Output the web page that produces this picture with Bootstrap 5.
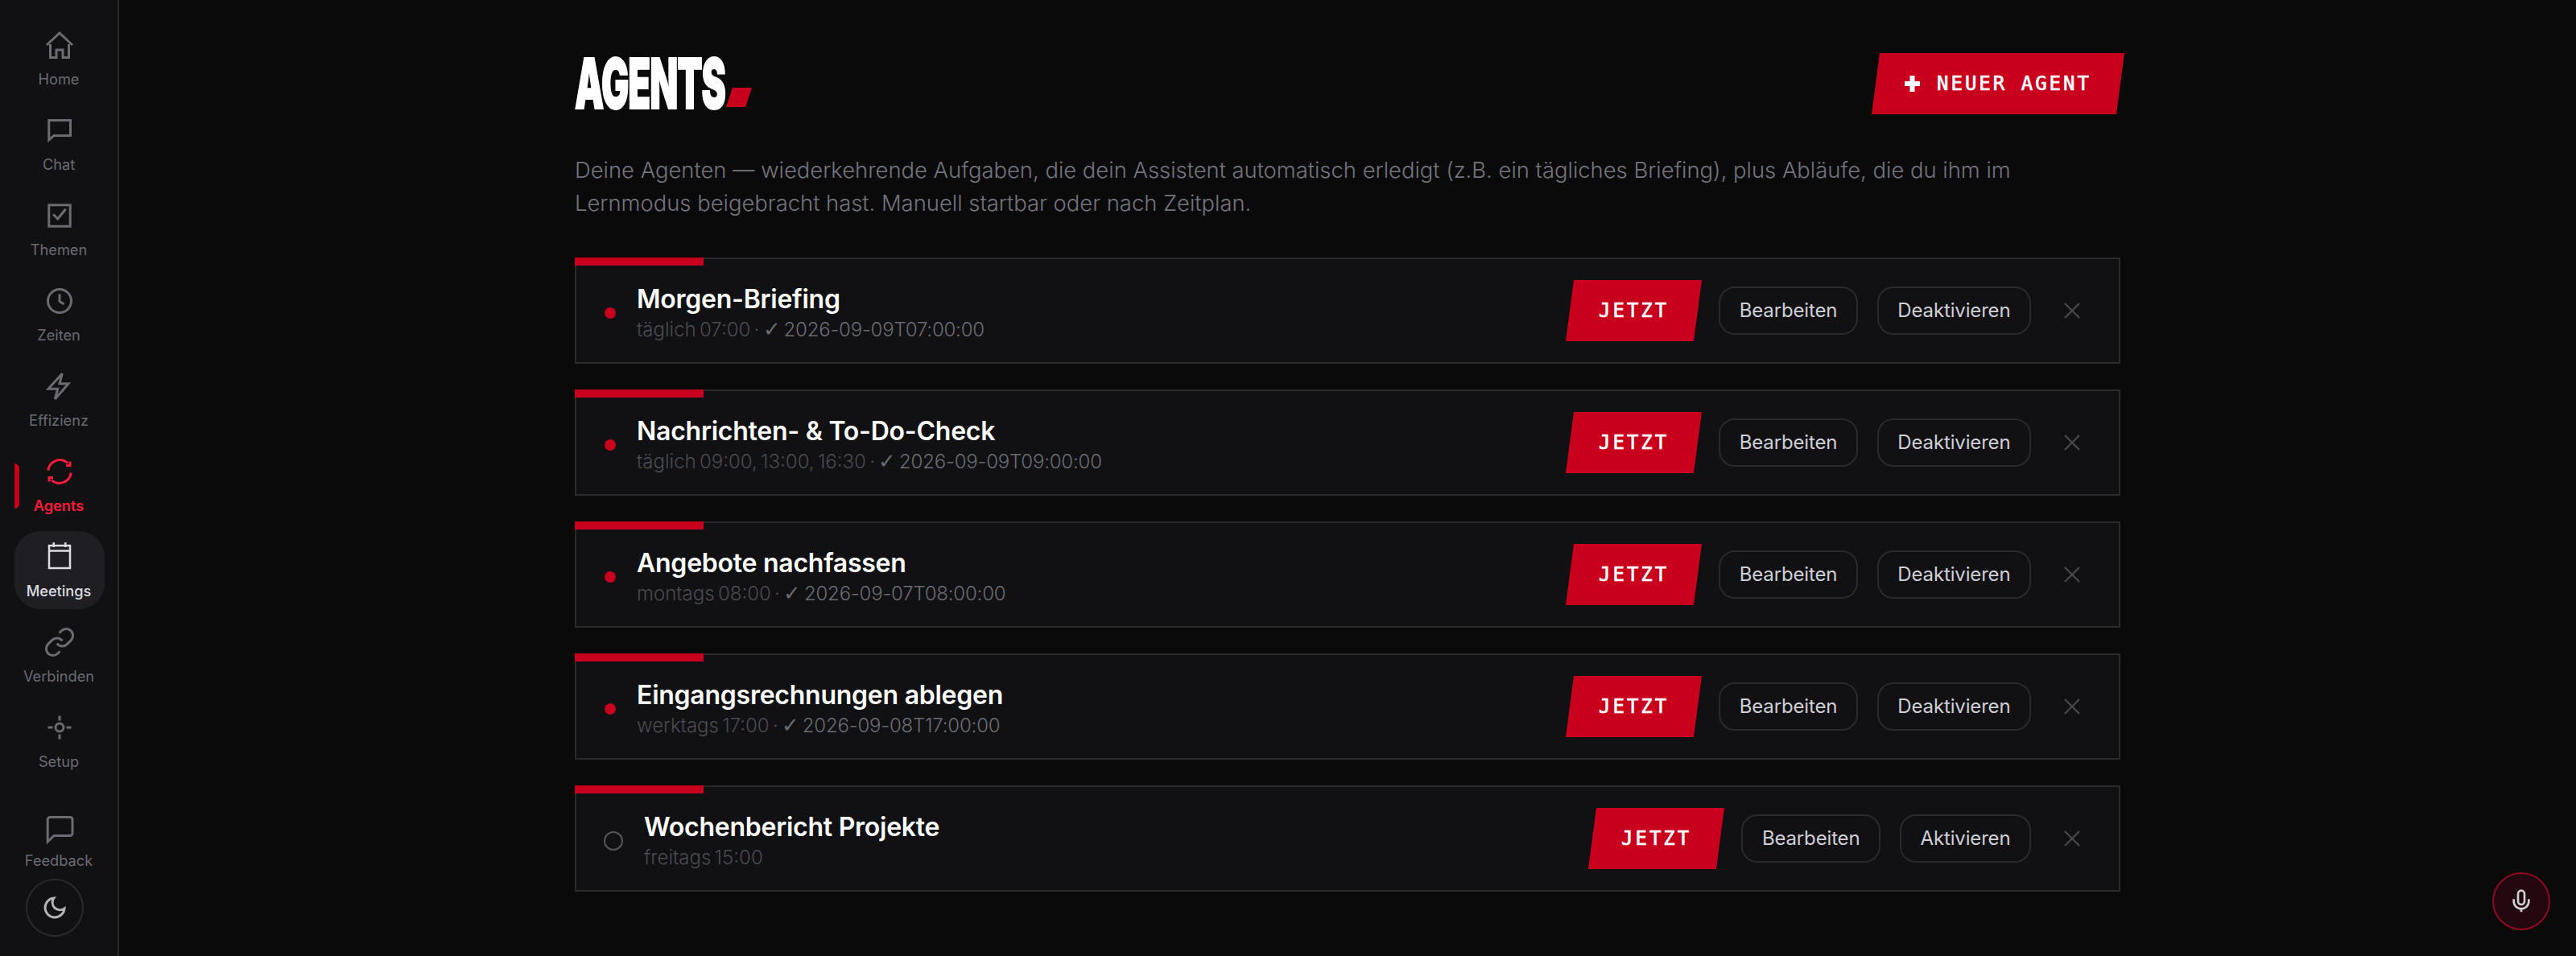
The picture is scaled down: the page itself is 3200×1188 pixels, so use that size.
<!DOCTYPE html>
<html lang="de">
<head>
    <meta charset="UTF-8">
    <title>Agents</title>
    <link href="https://cdn.jsdelivr.net/npm/bootstrap@5.3.3/dist/css/bootstrap.min.css" rel="stylesheet">
    <style>
        body { background: #0a0a0b; font-family: Inter, "Noto Sans", sans-serif; color: #fff; overflow: hidden; }
        .side { width: 148px; height: 1188px; background: #111113; border-right: 2px solid #2a2a2d; padding: 24px 0 24px 18px; flex-shrink: 0; }
        .side-item { width: 112px; height: 97px; margin-bottom: 9px; border-radius: 32px; color: #6b6b72; font-size: 18.2px; text-decoration: none; padding-top: 14px; }
        .side-item svg { width: 36px; height: 36px; fill: none; stroke: currentColor; stroke-width: 3; display: block; flex-shrink: 0; }
        .side-item span { line-height: 26px; margin-top: 11px; margin-right: 2px; }
        .side-item.is-active { color: #ff1a3c; font-weight: 600; }
        .side-item.is-hover { background: #1f1f23; color: #dcdce0; font-weight: 500; }
        .side-item.is-hover svg { stroke-width: 2.5; }
        .side-item svg.link-glyph { width: 40px; height: 40px; margin: -2px 0; stroke-width: 1.8; }
        .active-bar { left: 0; top: 22px; width: 6px; height: 56px; background: #c8001e; border-radius: 0 6px 6px 0; }
        .side-bottom { margin-top: 35px; }
        .side-bottom .side-item { height: 72px; margin-bottom: 0; padding-top: 0; }
        .side-bottom .side-item span { margin-top: 7px; }
        .moon-btn { width: 72px; height: 72px; margin-left: 14px; margin-top: 7px; border: 2px solid #2a2a2d; border-radius: 50%; background: transparent; color: #b4b4b9; padding: 0; }
        .page { width: 1920px; margin: 0 auto; padding-top: 66px; }
        .head-row { height: 76px; }
        .big-title { margin: 0; height: 68px; font: 900 86px/68px Inter, sans-serif; }
        .big-title b { display: inline-block; width: 188px; font-weight: 900; letter-spacing: -2px; transform: scaleX(.53); transform-origin: left center; white-space: nowrap; -webkit-text-stroke: 2px #fff; }
        .title-slash { display: inline-block; width: 32px; height: 24px; margin-top: 39px; background: #c8001e; clip-path: polygon(8px 0, 100% 0, calc(100% - 8px) 100%, 0 100%); }
        .red-btn { height: 76px; padding: 0 36px; background: #c8001e; color: #fff; border: 0; border-radius: 0; transform: skewX(-7.5deg); font: 400 24px "DejaVu Sans Mono", monospace; letter-spacing: 3px; -webkit-text-stroke: .7px #fff; }
        .red-btn > span { transform: skewX(7.5deg); }
        .red-btn:hover { background: #c8001e; color: #fff; }
        .agent-row .red-btn { margin-right: 2px; }
        .plus-mark { width: 19px; height: 20px; margin-right: 21px; fill: #fff; }
        .intro { margin: 49px 0 47px; font-size: 27.4px; line-height: 41px; font-weight: 300; color: #74747c; width: 1800px; }
        .agent-row { height: 132px; margin-bottom: 32px; background: #111113; border: 2px solid #2a2a2d; padding: 0 30px 0 34px; }
        .row-bar { top: -2px; left: -2px; width: 160px; height: 10px; background: #c8001e; }
        .state-dot { width: 14px; height: 14px; margin: 6px 26px 0 1px; border-radius: 50%; background: #c8001e; flex-shrink: 0; }
        .state-ring { width: 24px; height: 24px; margin: 6px 26px 0 0; border-radius: 50%; border: 2px solid #55555b; flex-shrink: 0; }
        .row-title { font-size: 32px; line-height: 42px; font-weight: 570; letter-spacing: -.25px; color: #fff; margin-top: 6px; }
        .row-sub { font-size: 24px; line-height: 36px; font-weight: 300; color: #4a4a50; word-spacing: -2.5px; margin-top: -1px; }
        .row-sub em { font-style: normal; color: #6b6b72; letter-spacing: -.2px; }
        .tick-mark { font-family: "DejaVu Sans", sans-serif; font-size: 26px; line-height: 0; }
        .ghost-btn { height: 60px; padding: 0 23.5px; background: transparent; border: 2px solid #2a2a2d; border-radius: 20px; color: #cfcfd6; font-size: 24px; font-weight: 400; letter-spacing: -.15px; margin-left: 24px; }
        .ghost-btn:hover { color: #cfcfd6; border-color: #2a2a2d; }
        .row-x { width: 56px; height: 56px; margin-left: 23px; padding: 18px; background: none; border: 0; color: #4a4a50; }
        .row-x svg { display: block; width: 20px; height: 20px; stroke: currentColor; stroke-width: 2; fill: none; }
        .mic-btn { right: 32px; bottom: 32px; width: 72px; height: 72px; border-radius: 50%; border: 2px solid #8f0a22; background: #230810; color: #d0d0d4; padding: 0; }
        .mic-btn svg { width: 32px; height: 32px; fill: none; stroke: currentColor; stroke-width: 2; }
    </style>
</head>
<body>
<div class="d-flex">
    <nav class="side d-flex flex-column">
        <a class="side-item d-flex flex-column align-items-center" href="#">
            <svg viewBox="0 0 36 36"><path d="M2 18 18 3l16 15"/><path d="M6.5 17v16.5H14V24h8v9.5h7.5V17"/></svg>
            <span>Home</span>
        </a>
        <a class="side-item d-flex flex-column align-items-center" href="#">
            <svg viewBox="0 0 36 36"><path d="M4.8 5.5h26.7v19H11l-6.2 5.5z"/></svg>
            <span>Chat</span>
        </a>
        <a class="side-item d-flex flex-column align-items-center" href="#">
            <svg viewBox="0 0 36 36"><rect x="4.8" y="4.8" width="26.4" height="26.4"/><path d="m10 16.3 5.7 5.7 10-12.3"/></svg>
            <span>Themen</span>
        </a>
        <a class="side-item d-flex flex-column align-items-center" href="#">
            <svg viewBox="0 0 36 36"><circle cx="18" cy="18" r="14.5"/><path d="M18 9.5v9l5.5 3.5"/></svg>
            <span>Zeiten</span>
        </a>
        <a class="side-item d-flex flex-column align-items-center" href="#">
            <svg viewBox="0 0 36 36"><path d="M21.3 2.3 4 21.3h11.7L12.3 34 29 14.7H18z"/></svg>
            <span>Effizienz</span>
        </a>
        <a class="side-item is-active position-relative d-flex flex-column align-items-center" href="#">
            <i class="active-bar position-absolute"></i>
            <svg viewBox="0 0 36 36"><path d="M3.8 16.5A14.5 14.5 0 0 1 28 7.5"/><path d="M31 5.5v5h-5"/><path d="M32.2 19.5A14.5 14.5 0 0 1 8 28.5"/><path d="M5 30.5v-5h5"/></svg>
            <span>Agents</span>
        </a>
        <a class="side-item is-hover d-flex flex-column align-items-center" href="#">
            <svg viewBox="0 0 36 36"><rect x="5" y="4" width="26" height="28"/><path d="M5 10.5h26M10.7 0v6M25.3 0v6"/></svg>
            <span>Meetings</span>
        </a>
        <a class="side-item d-flex flex-column align-items-center" href="#">
            <svg class="link-glyph" viewBox="0 0 24 24"><path d="M10 13a5 5 0 0 0 7.54.54l3-3a5 5 0 0 0-7.07-7.07l-1.72 1.71"/><path d="M14 11a5 5 0 0 0-7.54-.54l-3 3a5 5 0 0 0 7.07 7.07l1.71-1.71"/></svg>
            <span>Verbinden</span>
        </a>
        <a class="side-item d-flex flex-column align-items-center" href="#">
            <svg viewBox="0 0 36 36"><circle cx="18" cy="18" r="5"/><path d="M18 3.5v6M18 26.5v6M3.5 18h6M26.5 18h6"/></svg>
            <span>Setup</span>
        </a>
        <div class="side-bottom">
            <a class="side-item d-flex flex-column align-items-center" href="#">
                <svg viewBox="0 0 36 36"><path d="M3.2 33V5.5a3 3 0 0 1 3-3H31a3 3 0 0 1 3 3v17a3 3 0 0 1-3 3H11z"/></svg>
                <span>Feedback</span>
            </a>
            <button class="moon-btn d-flex align-items-center justify-content-center">
                <svg width="32" height="32" viewBox="0 0 24 24" fill="none" stroke="currentColor" stroke-width="2.2"><path d="M21 12.79A9 9 0 1 1 11.21 3 7 7 0 0 0 21 12.79z"/></svg>
            </button>
        </div>
    </nav>

    <main class="flex-grow-1">
        <div class="page">
            <div class="head-row d-flex justify-content-between align-items-center">
                <h1 class="big-title d-flex"><b>AGENTS</b><i class="title-slash"></i></h1>
                <button class="btn red-btn"><span class="d-flex align-items-center">
                    <svg class="plus-mark" viewBox="0 0 19 20"><path d="M6.5 0h6v7H19v6h-6.5v7h-6v-7H0V7h6.5z"/></svg>NEUER AGENT</span></button>
            </div>
            <p class="intro">Deine Agenten — wiederkehrende Aufgaben, die dein Assistent automatisch erledigt (z.B. ein tägliches Briefing), plus Abläufe, die du ihm im Lernmodus beigebracht hast. Manuell startbar oder nach Zeitplan.</p>
            <div id="agentList"></div>
        </div>
    </main>
</div>

<button class="mic-btn position-fixed d-flex align-items-center justify-content-center">
    <svg viewBox="0 0 24 24"><rect x="9" y="2" width="6" height="13" rx="3"/><path d="M19 10v2a7 7 0 0 1-14 0v-2M12 19v3"/></svg>
</button>

<script src="https://cdn.jsdelivr.net/npm/bootstrap@5.3.3/dist/js/bootstrap.bundle.min.js"></script>
<script>
    const agents = [
        { name: "Morgen-Briefing", plan: "täglich 07:00", last: "2026-09-09T07:00:00", on: true },
        { name: "Nachrichten- & To-Do-Check", plan: "täglich 09:00, 13:00, 16:30", last: "2026-09-09T09:00:00", on: true },
        { name: "Angebote nachfassen", plan: "montags 08:00", last: "2026-09-07T08:00:00", on: true },
        { name: "Eingangsrechnungen ablegen", plan: "werktags 17:00", last: "2026-09-08T17:00:00", on: true },
        { name: "Wochenbericht Projekte", plan: "freitags 15:00", last: null, on: false }
    ];

    document.getElementById("agentList").innerHTML = agents.map(a => `
        <div class="agent-row position-relative d-flex align-items-center">
            <i class="row-bar position-absolute"></i>
            <i class="${a.on ? "state-dot" : "state-ring"}"></i>
            <div class="flex-grow-1">
                <div class="row-title">${a.name}</div>
                <div class="row-sub">${a.plan}${a.last ? ` · <em><span class="tick-mark">✓</span> ${a.last}</em>` : ""}</div>
            </div>
            <button class="btn red-btn"><span class="d-block">JETZT</span></button>
            <button class="btn ghost-btn">Bearbeiten</button>
            <button class="btn ghost-btn">${a.on ? "Deaktivieren" : "Aktivieren"}</button>
            <button class="btn row-x"><svg viewBox="0 0 20 20"><path d="m1 1 18 18M19 1 1 19"/></svg></button>
        </div>`).join("");
</script>
</body>
</html>
